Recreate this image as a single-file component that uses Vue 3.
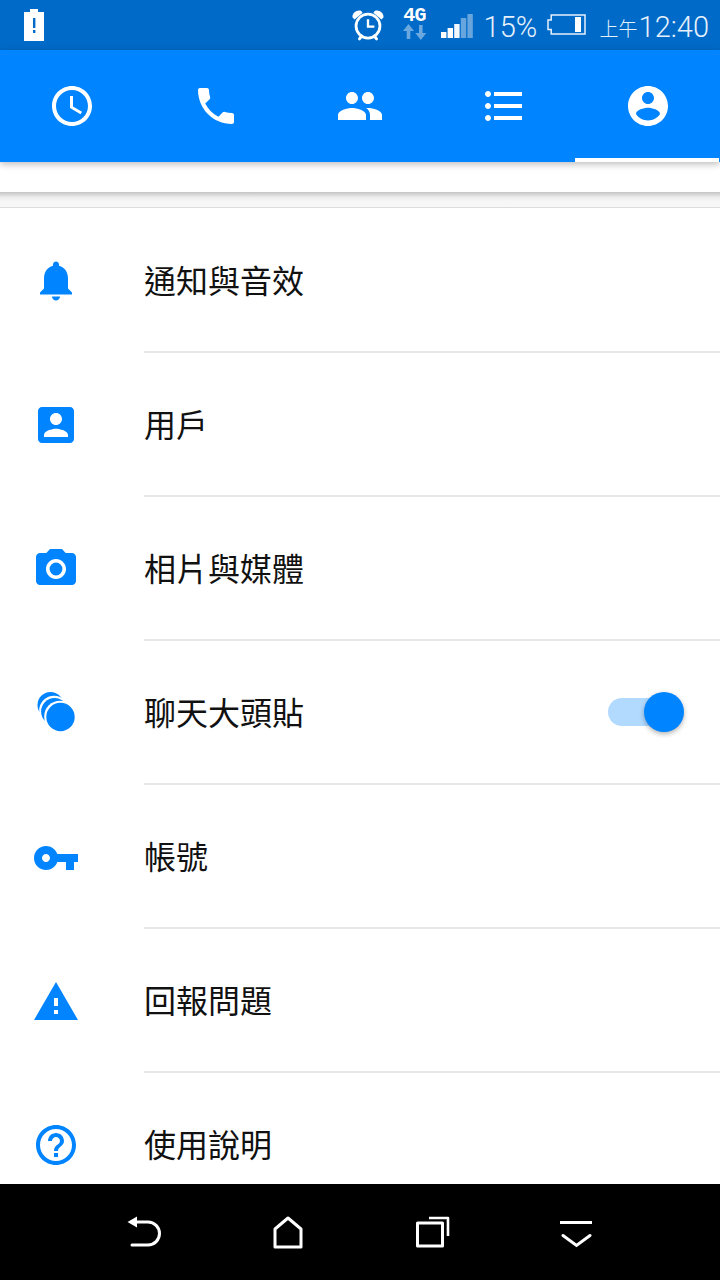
<script setup>
const tabs = [
  { d: 'M11.99 2C6.47 2 2 6.48 2 12s4.47 10 9.99 10C17.52 22 22 17.52 22 12S17.52 2 11.99 2zM12 20c-4.42 0-8-3.58-8-8s3.58-8 8-8 8 3.58 8 8-3.58 8-8 8zm.5-13H11v6l5.25 3.15.75-1.23-4.5-2.67z' },
  { d: 'M6.62 10.79c1.44 2.83 3.76 5.14 6.59 6.59l2.2-2.2c.27-.27.67-.36 1.02-.24 1.12.37 2.33.57 3.57.57.55 0 1 .45 1 1V20c0 .55-.45 1-1 1-9.39 0-17-7.61-17-17 0-.55.45-1 1-1h3.5c.55 0 1 .45 1 1 0 1.25.2 2.45.57 3.57.11.35.03.74-.25 1.02l-2.2 2.2z' },
  { d: 'M16 11c1.66 0 2.99-1.34 2.99-3S17.66 5 16 5c-1.66 0-3 1.34-3 3s1.34 3 3 3zm-8 0c1.66 0 2.99-1.34 2.99-3S9.66 5 8 5C6.34 5 5 6.34 5 8s1.34 3 3 3zm0 2c-2.33 0-7 1.17-7 3.5V19h14v-2.5c0-2.33-4.67-3.5-7-3.5zm8 0c-.29 0-.62.02-.97.05 1.16.84 1.97 1.97 1.97 3.45V19h6v-2.5c0-2.33-4.67-3.5-7-3.5z' },
  { d: 'M4 10.5c-.83 0-1.5.67-1.5 1.5s.67 1.5 1.5 1.5 1.5-.67 1.5-1.5-.67-1.5-1.5-1.5zm0-6c-.83 0-1.5.67-1.5 1.5S3.17 7.5 4 7.5 5.5 6.83 5.5 6 4.83 4.5 4 4.5zm0 12c-.83 0-1.5.68-1.5 1.5s.68 1.5 1.5 1.5 1.5-.68 1.5-1.5-.67-1.5-1.5-1.5zM7 19h14v-2H7v2zm0-6h14v-2H7v2zm0-8v2h14V5H7z' },
  { d: 'M12 2C6.48 2 2 6.48 2 12s4.48 10 10 10 10-4.48 10-10S17.52 2 12 2zm0 3c1.66 0 3 1.34 3 3s-1.34 3-3 3-3-1.34-3-3 1.34-3 3-3zm0 14.2c-2.5 0-4.71-1.28-6-3.22.03-1.99 4-3.08 6-3.08 1.99 0 5.97 1.09 6 3.08-1.29 1.94-3.5 3.22-6 3.22z', active: true },
]
const rows = [
  { label: '通知與音效', dy: -0.25, d: 'M12 22c1.1 0 2-.9 2-2h-4c0 1.1.89 2 2 2zm6-6v-5c0-3.07-1.64-5.64-4.5-6.32V4c0-.83-.67-1.5-1.5-1.5s-1.5.67-1.5 1.5v.68C7.63 5.36 6 7.92 6 11v5l-2 2v1h16v-1l-2-2z' },
  { label: '用戶', dy: 0, d: 'M3 5v14c0 1.1.89 2 2 2h14c1.1 0 2-.9 2-2V5c0-1.1-.9-2-2-2H5c-1.11 0-2 .9-2 2zm12 4c0 1.66-1.34 3-3 3s-3-1.34-3-3 1.34-3 3-3 3 1.34 3 3zm-9 8c0-2 4-3.1 6-3.1s6 1.1 6 3.1v1H6v-1z' },
  { label: '相片與媒體', dy: 0, d: 'M9 2L7.17 4H4c-1.1 0-2 .9-2 2v12c0 1.1.9 2 2 2h16c1.1 0 2-.9 2-2V6c0-1.1-.9-2-2-2h-3.17L15 2H9zm3 15c-2.76 0-5-2.24-5-5s2.24-5 5-5 5 2.24 5 5-2.24 5-5 5zM12 8.8a3.2 3.2 0 1 1 0 6.4 3.2 3.2 0 0 1 0-6.4z' },
  { label: '聊天大頭貼', dy: 0, bubbles: true, toggle: true },
  { label: '帳號', dy: 0.5, d: 'M12.65 10C11.83 7.67 9.61 6 7 6c-3.31 0-6 2.69-6 6s2.69 6 6 6c2.61 0 4.83-1.67 5.65-4H17v4h4v-4h2v-4H12.65zM7 14c-1.1 0-2-.9-2-2s.9-2 2-2 2 .9 2 2-.9 2-2 2z' },
  { label: '回報問題', dy: 0.5, d: 'M1 21h22L12 2 1 21zm12-3h-2v-2h2v2zm0-4h-2v-4h2v4z' },
  { label: '使用說明', dy: 0, d: 'M11 18h2v-2h-2v2zm1-16C6.48 2 2 6.48 2 12s4.48 10 10 10 10-4.48 10-10S17.52 2 12 2zm0 18c-4.41 0-8-3.59-8-8s3.59-8 8-8 8 3.59 8 8-3.59 8-8 8zm0-14c-2.21 0-4 1.79-4 4h2c0-1.1.9-2 2-2s2 .9 2 2c0 2-3 1.75-3 5h2c0-2.25 3-2.5 3-5 0-2.21-1.79-4-4-4z' },
]
const bars = [
  { x: 0, h: 6, o: 1 },
  { x: 6.6, h: 10, o: 1 },
  { x: 13.2, h: 14, o: 0.95 },
  { x: 19.8, h: 20, o: 0.4 },
  { x: 26.4, h: 24, o: 0.4 },
]
</script>

<template>
  <div class="page">
    <header class="status">
      <svg class="s-alert" width="20" height="32" viewBox="0 0 20 32">
        <path fill="#fff" d="M6 0h8v3h6v29H0V3h6z" />
        <path fill="#006ac8" d="M9 9h2.4v10H9zM9 21h2.4v3H9z" />
      </svg>
      <div class="s-right">
        <svg class="s-clock" width="32" height="32" viewBox="1 1 30 30" fill="none" stroke="#fff">
          <circle cx="16" cy="17" r="11.2" stroke-width="2.6" />
          <path stroke-width="2.2" d="M16 10.5V17.5H22" />
          <path stroke-width="2.8" stroke-linecap="round" d="M8 29l2-2.6M24 29l-2-2.6" />
          <path fill="#fff" stroke="none" d="M1.5 9C1 4.5 5.5 1.5 9.4 2.6L11 4.4 3.4 10.8zM30.5 9C31 4.5 26.5 1.5 22.6 2.6L21 4.4 28.6 10.8z" />
        </svg>
        <div class="s-net">
          <span class="s-4g">4G</span>
          <svg width="24" height="16" viewBox="0 0 24 16" fill="#fff" fill-opacity=".42">
            <path d="M5.5 0L11 7H7.3v8H3.7V7H0zM17.8 16L12.3 9H16V1h3.6v8h3.7z" />
          </svg>
        </div>
        <svg class="s-signal" width="32" height="24" viewBox="0 0 32 24">
          <rect v-for="b in bars" :key="b.x" :x="b.x" :y="24 - b.h" width="5.4" :height="b.h" fill="#fff" :fill-opacity="b.o" />
        </svg>
        <span class="s-pct">15%</span>
        <svg class="s-batt" width="39" height="21" viewBox="0 0 39 21" fill="none" stroke="#e6f1fb" stroke-width="1.5">
          <path d="M4.2 1h33.8v19H4.2v-4.6H1V6h3.2z" />
          <rect x="28" y="3" width="6" height="15" fill="#fff" stroke="none" />
        </svg>
        <span class="s-ampm">上午</span>
        <span class="s-time">12:40</span>
      </div>
    </header>

    <nav class="tabs">
      <div v-for="(t, i) in tabs" :key="i" class="tab" :class="{ active: t.active }">
        <svg width="48" height="48" viewBox="0 0 24 24" fill="#fff"><path :d="t.d" /></svg>
      </div>
    </nav>

    <div class="gap"></div>
    <div class="band"></div>

    <main class="list">
      <div v-for="r in rows" :key="r.label" class="row">
        <div class="row-icon">
          <svg v-if="r.bubbles" width="48" height="48" viewBox="0 0 48 48" class="bubbles">
            <circle cx="18.5" cy="16" r="13" fill="#0084ff" />
            <circle cx="22" cy="21.5" r="14.8" fill="#fff" />
            <circle cx="22.5" cy="22.4" r="13.4" fill="#0084ff" />
            <circle cx="28" cy="27.5" r="15.8" fill="#fff" />
            <circle cx="28.5" cy="28" r="14.2" fill="#0084ff" />
          </svg>
          <svg v-else width="48" height="48" viewBox="0 0 24 24" fill="#0084ff" fill-rule="evenodd">
            <path :d="r.d" :transform="`translate(0 ${r.dy})`" />
          </svg>
        </div>
        <div class="row-body">
          <span class="label">{{ r.label }}</span>
          <div v-if="r.toggle" class="toggle">
            <span class="track"></span>
            <span class="knob"></span>
          </div>
        </div>
      </div>
    </main>

    <footer class="nav">
      <svg class="n-back" width="36" height="34" viewBox="0 0 36 34" fill="none" stroke="#fff" stroke-width="3" stroke-linecap="round">
        <path d="M9 6H21A11.5 11.5 0 0 1 21 29H5" />
        <path fill="#fff" stroke="none" d="M0.5 6L10 0.5V11.5z" />
      </svg>
      <svg class="n-home" width="30" height="33" viewBox="0 0 30 33" fill="none" stroke="#fff" stroke-width="3" stroke-linejoin="round">
        <path d="M15 2L28 13V31H2V13z" />
      </svg>
      <svg class="n-recent" width="34" height="32" viewBox="0 0 34 32" fill="none" stroke="#fff" stroke-width="3" stroke-linejoin="round">
        <rect x="1.5" y="7" width="25" height="23" />
        <path stroke-width="2.6" d="M13 2H32V20" />
      </svg>
      <svg class="n-menu" width="32" height="27" viewBox="0 0 32 27" fill="none" stroke="#fff" stroke-width="3" stroke-linecap="round">
        <path stroke-linecap="butt" d="M0 1.5H32" />
        <path d="M3 14.5L16.5 24.5L30 14.5" />
      </svg>
    </footer>
  </div>
</template>

<style scoped>
.page {
  width: 720px;
  height: 1280px;
  display: flex;
  flex-direction: column;
  overflow: hidden;
  background: #fff;
  font-family: "Noto Sans CJK TC", "Noto Sans", sans-serif;
}
.status {
  height: 50px;
  flex: none;
  background: #006ac8;
  display: flex;
  align-items: flex-start;
  color: #e6f1fb;
}
.s-alert { margin: 9px 0 0 24px; }
.s-right {
  margin-left: auto;
  display: flex;
  align-items: flex-start;
}
.s-clock { margin: 9px 0 0 0; }
.s-net {
  width: 24px;
  margin: 8px 0 0 19px;
  display: flex;
  flex-direction: column;
  align-items: center;
}
.s-4g {
  font: 700 20px/16px "Liberation Mono", monospace;
  letter-spacing: -0.6px;
  color: #fff;
}
.s-signal { margin: 14px 0 0 14px; }
.s-pct {
  margin: 8px 0 0 11px;
  width: 54px;
  font: 300 29px/38px Roboto, sans-serif;
}
.s-batt { margin: 14px 0 0 9px; }
.s-ampm {
  margin: 14px 0 0 14px;
  font-size: 19px;
  line-height: 28px;
  font-weight: 300;
}
.s-time {
  margin: 8px 11px 0 1px;
  font: 300 29px/38px Roboto, sans-serif;
}
.tabs {
  height: 112px;
  flex: none;
  background: #0084ff;
  display: flex;
  box-shadow: 0 2px 7px rgba(0, 0, 0, .28);
  position: relative;
  z-index: 1;
}
.tab {
  flex: 1;
  display: flex;
  align-items: center;
  justify-content: center;
  position: relative;
}
.tab.active::after {
  content: "";
  position: absolute;
  left: -1px;
  right: 1px;
  bottom: 0;
  height: 4px;
  background: #fff;
}
.gap { height: 30px; flex: none; background: #fff; }
.band {
  height: 16px;
  flex: none;
  box-sizing: border-box;
  background: linear-gradient(#c4c4c4, #ececec 35%, #f6f6f6 60%, #f7f7f7);
  border-bottom: 1px solid #dcdcdc;
}
.list {
  flex: 1;
  min-height: 0;
  overflow: hidden;
  padding-top: 1px;
}
.row {
  height: 144px;
  display: flex;
}
.row-icon {
  width: 144px;
  flex: none;
  box-sizing: border-box;
  padding-left: 32px;
  display: flex;
  align-items: center;
}
.row-body {
  flex: 1;
  box-sizing: border-box;
  padding: 0 36px 2px 0;
  border-bottom: 2px solid #e8e8e8;
  display: flex;
  align-items: center;
  justify-content: space-between;
}
.label {
  font-size: 32px;
  line-height: 44px;
  color: #111;
}
.toggle {
  position: relative;
  width: 76px;
  height: 40px;
  margin-top: 2px;
}
.track {
  position: absolute;
  left: 0;
  top: 6px;
  width: 68px;
  height: 28px;
  border-radius: 14px;
  background: #b2daff;
}
.knob {
  position: absolute;
  right: 0;
  top: 0;
  width: 40px;
  height: 40px;
  border-radius: 50%;
  background: #0084ff;
  box-shadow: 0 2px 5px rgba(0, 0, 0, .3);
}
.nav {
  height: 96px;
  flex: none;
  background: #000;
  display: flex;
  align-items: flex-start;
}
.n-back { margin: 32px 0 0 127px; }
.n-home { margin: 32px 0 0 110px; }
.n-recent { margin: 32px 0 0 113px; }
.n-menu { margin: 37px 0 0 110px; }
</style>
